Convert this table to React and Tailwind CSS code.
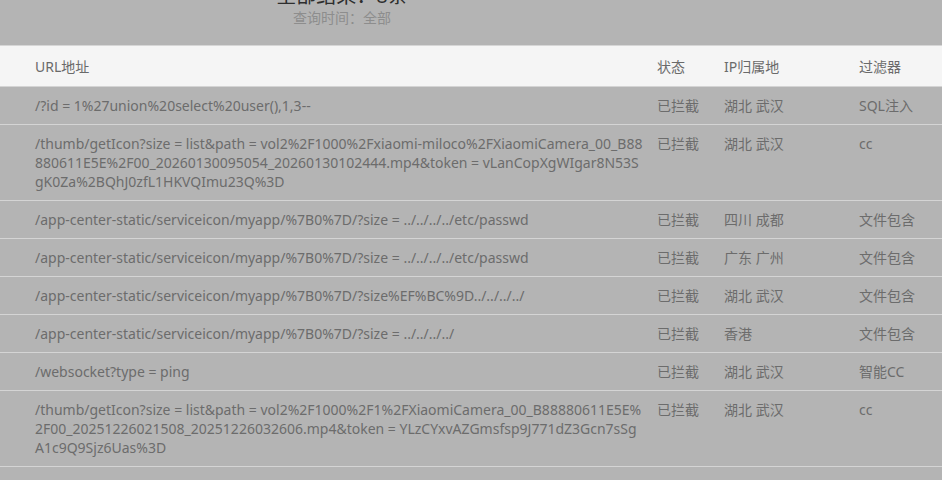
import React from 'react';

const rows = [
  {
    url: ['/?id = 1%27union%20select%20user(),1,3--'],
    status: '已拦截',
    ip: '湖北 武汉',
    filter: 'SQL注入',
  },
  {
    url: [
      '/thumb/getIcon?size = list&path = vol2%2F1000%2Fxiaomi-miloco%2FXiaomiCamera_00_B88',
      '880611E5E%2F00_20260130095054_20260130102444.mp4&token = vLanCopXgWIgar8N53S',
      'gK0Za%2BQhJ0zfL1HKVQImu23Q%3D',
    ],
    status: '已拦截',
    ip: '湖北 武汉',
    filter: 'cc',
  },
  {
    url: ['/app-center-static/serviceicon/myapp/%7B0%7D/?size = ../../../../etc/passwd'],
    status: '已拦截',
    ip: '四川 成都',
    filter: '文件包含',
  },
  {
    url: ['/app-center-static/serviceicon/myapp/%7B0%7D/?size = ../../../../etc/passwd'],
    status: '已拦截',
    ip: '广东 广州',
    filter: '文件包含',
  },
  {
    url: ['/app-center-static/serviceicon/myapp/%7B0%7D/?size%EF%BC%9D../../../../'],
    status: '已拦截',
    ip: '湖北 武汉',
    filter: '文件包含',
  },
  {
    url: ['/app-center-static/serviceicon/myapp/%7B0%7D/?size = ../../../../'],
    status: '已拦截',
    ip: '香港',
    filter: '文件包含',
  },
  {
    url: ['/websocket?type = ping'],
    status: '已拦截',
    ip: '湖北 武汉',
    filter: '智能CC',
  },
  {
    url: [
      '/thumb/getIcon?size = list&path = vol2%2F1000%2F1%2FXiaomiCamera_00_B88880611E5E%',
      '2F00_20251226021508_20251226032606.mp4&token = YLzCYxvAZGmsfsp9J771dZ3Gcn7sSg',
      'A1c9Q9Sjz6Uas%3D',
    ],
    status: '已拦截',
    ip: '湖北 武汉',
    filter: 'cc',
  },
];

const grid = 'grid grid-cols-[645px_67px_135px_1fr]';

export default function App() {
  return (
    <div
      className="h-[480px] w-[942px] overflow-hidden bg-[#b4b4b4] text-[14px] text-[#6c6c6c]"
      style={{ fontFamily: '"Noto Sans", "Noto Sans CJK SC", sans-serif' }}
    >
      {/* summary */}
      <div className="flex h-[45px] w-[684px] flex-col items-center">
        <div className="-mt-[15px] text-[20px] leading-[22px] text-[#2e2e2e]">全部结果：8条</div>
        <div className="mt-[1px] leading-[19px] text-[#8d8d8d]">查询时间：全部</div>
      </div>

      {/* table header */}
      <div className={`${grid} border-t border-[#d6d6d6] bg-[#f5f5f5] leading-[19px] text-[#6a6a6a]`}>
        <div className="pb-[10px] pt-[11px] pl-[35px]">URL地址</div>
        <div className="pb-[10px] pt-[11px] pl-[12px]">状态</div>
        <div className="pb-[10px] pt-[11px] pl-[12px]">IP归属地</div>
        <div className="pb-[10px] pt-[11px] pl-[12px]">过滤器</div>
      </div>

      {/* rows */}
      <div className="border-b border-[#d4d4d4]">
        {rows.map((r, i) => (
          <div key={i} className={`${grid} border-t border-[#d4d4d4] leading-[19px]`}>
            <div className="py-[9px] pl-[35px] pr-[8px]">
              {r.url.map((line, j) => (
                <div key={j} className="whitespace-nowrap">{line}</div>
              ))}
            </div>
            <div className="py-[9px] pl-[12px]">{r.status}</div>
            <div className="py-[9px] pl-[12px]">{r.ip}</div>
            <div className="py-[9px] pl-[12px]">{r.filter}</div>
          </div>
        ))}
      </div>
    </div>
  );
}
